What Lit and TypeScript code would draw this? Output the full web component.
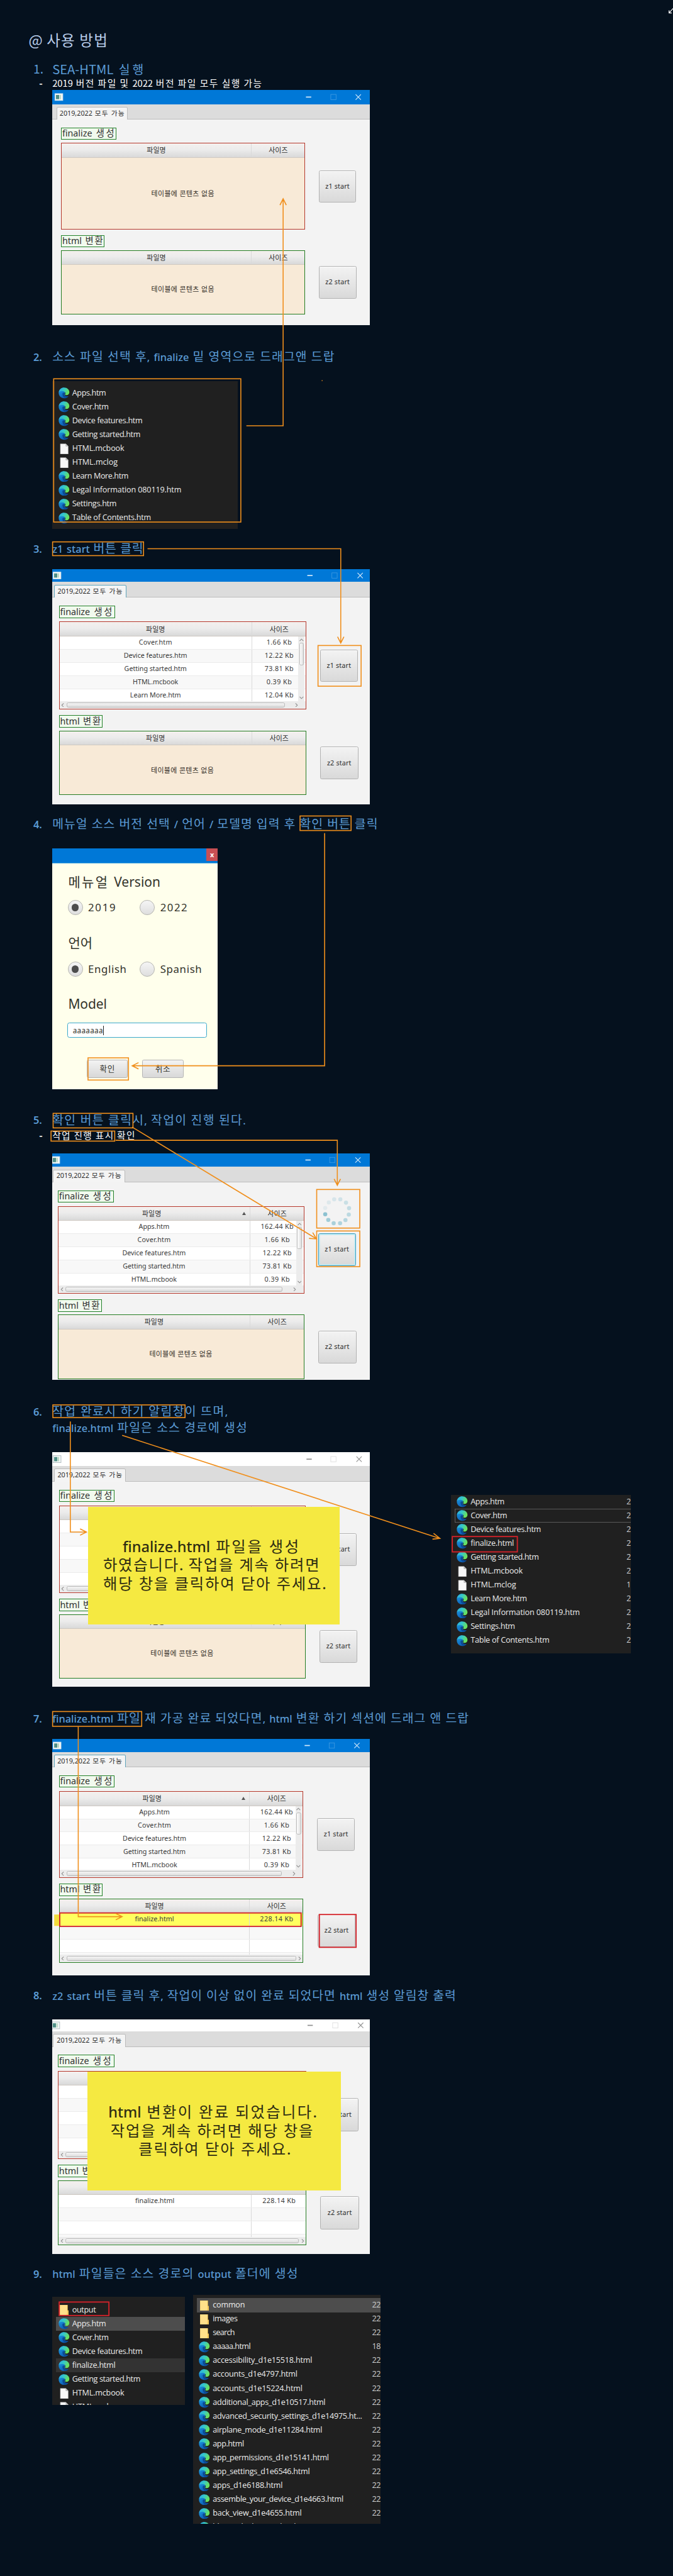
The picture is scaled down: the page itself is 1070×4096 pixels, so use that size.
import { LitElement, html, svg, css, nothing } from "lit";
import { customElement, property } from "lit/decorators.js";
import { classMap } from "lit/directives/class-map.js";
import { styleMap } from "lit/directives/style-map.js";

const px = (n: number) => `${n}px`;

/**
 * A single line of text that spans exactly `w` units. Hangul takes up the tracking;
 * Latin runs beside it keep their own spacing and may be set a little smaller.
 */
@customElement("fit-text")
class FitText extends LitElement {
  @property({ type: Number }) w = 0;
  @property() text = "";
  static styles = css`
    :host { display: inline-block; white-space: pre; flex: none; text-align: left; }
    .line { display: inline-block; letter-spacing: var(--track, 0); }
    .lat { font-size: var(--lat-size, 1em); font-weight: var(--lat-weight, inherit); letter-spacing: 0; }
  `;
  private runs() {
    const mixed = /[가-힣]/.test(this.text);
    return mixed ? this.text.split(/([!-~]+)/).filter(s => s !== "") : [this.text];
  }
  updated() {
    this.style.width = px(this.w);
    const line = this.renderRoot.querySelector(".line") as HTMLElement;
    line.style.setProperty("--track", "0px");
    const box = this.getBoundingClientRect().width;
    if (!box) return;
    const natural = (line.getBoundingClientRect().width / box) * this.w;
    const runs = this.runs();
    const tracked = runs.length > 1 ? runs.filter(r => !/^[!-~]/.test(r)).join("").length : this.text.length;
    line.style.setProperty("--track", px((this.w - natural) / Math.max(1, tracked - 0.5)));
  }
  render() {
    const runs = this.runs();
    return html`<span class="line">${runs.length > 1
      ? runs.map(r => /^[!-~]/.test(r) ? html`<span class="lat">${r}</span>` : r)
      : this.text}</span>`;
  }
}

const fit = (text: string, w: number) => html`<fit-text .text=${text} .w=${w}></fit-text>`;

interface FileRow { icon: "edge" | "doc" | "dir"; name: string; w: number; mark?: string; end?: string; }

const N: Record<string, FileRow> = {
  apps: { icon: "edge", name: "Apps.htm", w: 64 },
  cover: { icon: "edge", name: "Cover.htm", w: 69 },
  device: { icon: "edge", name: "Device features.htm", w: 133 },
  finalize: { icon: "edge", name: "finalize.html", w: 82 },
  getting: { icon: "edge", name: "Getting started.htm", w: 129 },
  mcbook: { icon: "doc", name: "HTML.mcbook", w: 98.5 },
  mclog: { icon: "doc", name: "HTML.mclog", w: 86 },
  learn: { icon: "edge", name: "Learn More.htm", w: 106.5 },
  legal: { icon: "edge", name: "Legal Information 080119.htm", w: 206.5 },
  settings: { icon: "edge", name: "Settings.htm", w: 84 },
  toc: { icon: "edge", name: "Table of Contents.htm", w: 149 },
};

const icons = {
  edge: svg`<svg class="ico" viewBox="0 0 24 24">
    <defs>
      <linearGradient id="eb" x1="0" y1="0" x2=".5" y2="1"><stop offset="0" stop-color="#1fa6ea"/><stop offset="1" stop-color="#0c5cb4"/></linearGradient>
      <linearGradient id="eg" x1="0" y1="0" x2="1" y2=".4"><stop offset="0" stop-color="#2aa8e4"/><stop offset=".5" stop-color="#36c8c8"/><stop offset="1" stop-color="#6be25a"/></linearGradient>
    </defs>
    <path fill="url(#eb)" d="M12 0.5C5 0.5.5 5.5.5 12S5.5 23.5 12 23.5c4 0 7.400-1.800 9.400-4.600-3.500 1.300-8.400 0-8.400-4.400L14 9z"/>
    <path fill="#0b4a94" d="M8.600 13.500c-.3 5 3 9.500 8 8.900 2-.8 3.700-2 4.800-3.500-3.900 1.500-9.400 0-9.400-4.400 0-1.500.8-2.500.8-2.500-2-.8-4-.7-4.200 1.500z"/>
    <path fill="url(#eg)" d="M.8 10.500C1.800 4.700 6.500.5 12.200.5c6.500 0 11.300 4.500 11.300 10.200 0 3.700-2.900 6.100-6 6.100-2.600 0-3.800-1-3.200-2 1.600-2.600-.2-5.800-4.200-6.600C6 7.400 2.300 8.600.8 10.500z"/>
  </svg>`,
  doc: svg`<svg class="ico" viewBox="0 0 24 24">
    <path fill="#f7f7f7" stroke="#a9a9a9" stroke-width=".8" d="M4 1h12l5 5v17H4z"/><path fill="#c9c9c9" stroke="#8c8c8c" stroke-width=".6" d="M16 1v5h5z"/>
  </svg>`,
  dir: svg`<svg class="ico" viewBox="0 0 24 24">
    <path fill="#e9b94c" d="M3 1.500h17V13h1.800v10H3z"/><path fill="#ffe08a" d="M3 1.500h16V23H3z"/><path fill="#f4c95d" d="M19 14h2.800v9H18z"/>
  </svg>`,
};

/** A dark explorer file listing. */
@customElement("file-list")
class FileList extends LitElement {
  @property({ attribute: false }) rows: FileRow[] = [];
  static styles = css`
    :host { display: block; background: #202020; overflow: hidden; box-sizing: border-box; }
    .row { display: flex; align-items: center; height: 26.27px; box-sizing: border-box; margin-left: 7px;
      font: 15px/20px "Open Sans", "Noto Sans", "Noto Sans CJK KR", sans-serif; color: #ececec; }
    .ico { width: 21px; height: 21px; flex: none; margin-right: 5px; }
    .row.hot { background: #4d4d4d; }
    .row.dim { background: #333; }
    .row.ring { box-shadow: inset 1px 0 #6c6c6c, inset 0 1px #6c6c6c, inset 0 -1px #6c6c6c; }
    .lead { width: 4.500px; flex: none; }
    .end { color: #cfcfcf; }
    .space { flex: 1; }
  `;
  render() {
    return this.rows.map(r => html`
      <div class=${classMap({ row: true, [r.mark ?? "plain"]: true })}>
        <span class="lead"></span>${icons[r.icon]}${fit(r.name, r.w)}<span class="space"></span>
        ${r.end ? html`<span class="end">${fit(r.end, r.end.length * 8.2)}</span>` : nothing}
      </div>`);
  }
}

interface Cell { name: string; w: number; size: string; sw: number; }
const cell = (name: string, w: number, size: string, sw: number): Cell => ({ name, w, size, sw });
const C = {
  apps: cell("Apps.htm", 58, "162.44 Kb", 62),
  cover: cell("Cover.htm", 63, "1.66 Kb", 48),
  device: cell("Device features.htm", 120, "12.22 Kb", 55),
  getting: cell("Getting started.htm", 118, "73.81 Kb", 55),
  mcbook: cell("HTML.mcbook", 86, "0.39 Kb", 48),
  learn: cell("Learn More.htm", 96, "12.04 Kb", 55),
  fin: cell("finalize.html", 74, "228.14 Kb", 63),
};

/** Vertical measures count from the window's top, horizontal ones from its left. */
interface Win {
  h: number; title: number; strip: number; tabX: number; tabW: number; tabTop: number; focusTab?: boolean; idle?: boolean;
  iconX: number; ctl: [number, number, number];
  x: number; w: number; col: number; lab1: [number, number]; lab2: [number, number]; labH: number;
  t1: [number, number, number]; t2: [number, number, number]; rows1?: Cell[]; rows2?: Cell[]; sort?: boolean;
  b1: [number, number, number, number]; b2: [number, number, number, number]; focusB1?: boolean; picked?: boolean;
  note?: { x: number; y: number; w: number; h: number; pad: number; lines: [string, number, number][] };
}

/** The converter application window. */
@customElement("app-window")
class AppWindow extends LitElement {
  @property({ attribute: false }) c!: Win;
  static styles = css`
    :host { display: block; position: relative; background: #f3f3f3; overflow: hidden;
      font-family: "Noto Sans", "Noto Sans CJK KR", sans-serif; font-size: 12.8px; line-height: 16px; color: #2c2c2c; }
    .title { background: #0078d7; color: #d6ebfb; display: flex; align-items: center; box-sizing: border-box; }
    .title.idle { background: #fff; color: #8f8f8f; }
    .title svg { width: 600px; height: 100%; display: block; }
    .strip { display: flex; align-items: flex-end; background: #dcdcdc; border-bottom: 1px solid #bcbcbc; box-sizing: border-box; }
    .tab { background: #f4f4f4; border: 1px solid #bcbcbc; border-bottom: 0; border-radius: 3px 3px 0 0; box-sizing: border-box;
      display: flex; align-items: center; justify-content: center; margin-bottom: -1px; }
    .tab.focus { border: 2px solid #5fa5bd; border-bottom: 0; }
    .body { display: flex; align-items: flex-start; }
    .left, .right { display: flex; flex-direction: column; align-items: flex-start; flex: none; }
    .label { border: 1px solid #23812a; background: #f1faee; box-sizing: border-box; display: flex; align-items: center;
      padding-left: 1px; font-size: 17px; line-height: 20px; color: #303030; }
    .table { position: relative; box-sizing: border-box; border: 1px solid #b5382c; display: flex; flex-direction: column; overflow: hidden; background: #f8ead7; }
    .table.green { border-color: #247c22; }
    .head { display: flex; background: linear-gradient(#f4f0ee, #ececec 45%, #d9d9d9); border-bottom: 1px solid #cfc9c2; box-sizing: border-box; flex: none; font-size: 13px; }
    .c1, .c2 { display: flex; align-items: center; justify-content: center; box-sizing: border-box; flex: none; position: relative; }
    .c1 { border-right: 1px solid #dadada; }
    .c2 { flex: 1; padding-left: 1px; }
    .empty { flex: 1; display: flex; align-items: center; justify-content: center; font-size: 13px; color: #332d27; padding-right: 1px; }
    .rows { flex: 1; overflow: hidden; background: #fff; }
    .row { display: flex; height: 24.95px; background: #fff; border-bottom: 1px solid #ebebeb; box-sizing: border-box; color: #3a3a3a; }
    .row:nth-child(even) { background: #f8f8f8; }
    .row.picked { background: #ffff5e; }
    .sortmark { position: absolute; right: 7px; width: 0; border: 4px solid transparent; border-top: 0; border-bottom: 7px solid #555; }
    .vbar { position: absolute; right: 2px; width: 12px; background: #ececec; display: flex; flex-direction: column; align-items: center; justify-content: space-between; }
    .vbar .thumb { width: 9px; height: 42px; margin-bottom: auto; border: 1px solid #bdbdbd; border-radius: 3px; background: linear-gradient(90deg, #fff, #dedede); box-sizing: border-box; }
    .hbar { height: 14px; flex: none; background: #ececec; display: flex; align-items: center; padding: 0 3px; }
    .hbar .thumb { flex: 1; height: 10px; margin: 0 4px; border: 1px solid #b9b9b9; border-radius: 3px; background: linear-gradient(#f6f6f6, #dcdcdc); box-sizing: border-box; }
    .hbar.short { padding-right: 14px; }
    .hbar.short .thumb { margin-right: 20px; }
    .chev { width: 6px; height: 8px; flex: none; fill: none; stroke: #8b8b8b; stroke-width: 1.2; }
    .chev.v { width: 8px; height: 6px; margin: 3px 0; }
    .btn { display: flex; align-items: center; justify-content: center; box-sizing: border-box; border: 1px solid #b2b2b2; border-radius: 3px;
      background: linear-gradient(#f3f3f3, #d9d9d9); box-shadow: inset 0 1px #fff; }
    .btn.focus { border: 2px solid #3c9cbc; box-shadow: inset 0 0 0 2px #b9e9f4; }
    .note { position: absolute; background: #f5e941; color: #2f2d12; box-sizing: border-box; font-size: 29px; line-height: 35px; --lat-size: 28px; --lat-weight: 500; }
    .nl { display: flex; height: 35px; align-items: center; }
  `;
  private table(t: [number, number, number], rows: Cell[] | undefined, green: boolean, first: boolean, gap: number) {
    const c = this.c;
    const colW = px(c.col - c.x - 1.5);
    const full: (Cell | null)[] = rows ? (first ? rows : [...rows, null, null, null]) : [];
    return html`<div class=${classMap({ table: true, green })} style=${styleMap({ marginTop: px(gap), width: px(c.w), height: px(t[1]) })}>
      <div class="head" style=${styleMap({ height: px(t[2]) })}>
        <div class="c1" style=${styleMap({ width: colW, paddingRight: px(c.sort && first ? 9 : 0) })}>
          ${fit("파일명", 36)}${c.sort && first ? html`<span class="sortmark"></span>` : nothing}
        </div>
        <div class="c2">${fit("사이즈", 36)}</div>
      </div>
      ${rows ? html`
        <div class="rows">${full.map((r, i) => html`
          <div class=${classMap({ row: true, picked: !!c.picked && !first && i === 0 })}>
            <div class="c1" style=${styleMap({ width: colW })}>${r && r.name ? fit(r.name, r.w) : nothing}</div>
            <div class="c2">${r && r.size ? fit(r.size, r.sw) : nothing}</div>
          </div>`)}</div>
        <div class=${classMap({ hbar: true, short: first })}>
          <svg class="chev" viewBox="0 0 6 8"><path d="M5 0.500L1.500 4 5 7.500"/></svg><span class="thumb"></span>
          <svg class="chev" viewBox="0 0 6 8"><path d="M1 0.500L4.500 4 1 7.500"/></svg>
        </div>
        ${first ? html`<div class="vbar" style=${styleMap({ top: px(t[2]), height: px(t[1] - t[2] - 17) })}>
          <svg class="chev v" viewBox="0 0 8 6"><path d="M.5 5L4 1.500 7.500 5"/></svg><span class="thumb"></span>
          <svg class="chev v" viewBox="0 0 8 6"><path d="M.5 1L4 4.500 7.500 1"/></svg></div>` : nothing}
      ` : html`<div class="empty">${fit("테이블에 콘텐츠 없음", 119)}</div>`}
    </div>`;
  }
  private button(text: string, b: [number, number, number, number], top: number, left: number, focus: boolean) {
    return html`<div class=${classMap({ btn: true, focus })}
      style=${styleMap({ marginTop: px(b[1] - top), marginLeft: px(b[0] - left), width: px(b[2]), height: px(b[3]) })}>${fit(text, 46)}</div>`;
  }
  render() {
    const c = this.c;
    const mid = c.title / 2;
    const edge = c.x + c.w;
    return html`
      <div class=${classMap({ title: true, idle: !!c.idle })} style=${styleMap({ height: px(c.title) })}>
        <svg viewBox="0 0 600 ${c.title}" fill="none" stroke="currentColor">
          <rect x=${c.iconX} y=${mid - 6.5} width="15" height="13" fill="#f3f7f6" stroke=${c.idle ? "#a8b4b8" : "#d5e4ec"}/>
          <rect x=${c.iconX + 2} y=${mid - 4} width="6" height="8" fill="#4f8f86" stroke="none"/>
          <rect x=${c.iconX + 9} y=${mid - 4} width="2" height="8" fill="#a9cfb4" stroke="none"/>
          <path stroke-width="2" d="M${c.ctl[0] - 5} ${mid}h10"/>
          <rect opacity=".3" x=${c.ctl[1] - 5} y=${mid - 5} width="10" height="10"/>
          <path stroke-width="1.3" d="M${c.ctl[2] - 5} ${mid - 5}l10 10m0 -10l-10 10"/>
        </svg>
      </div>
      <div class="strip" style=${styleMap({ height: px(c.strip - c.title), paddingLeft: px(c.tabX) })}>
        <div class=${classMap({ tab: true, focus: !!c.focusTab })} style=${styleMap({ width: px(c.tabW), height: px(c.strip - c.tabTop) })}>${fit("2019,2022 모두 가능", 123)}</div>
      </div>
      <div class="body">
        <div class="left" style=${styleMap({ width: px(edge), paddingLeft: px(c.x), boxSizing: "border-box" })}>
          <div class="label" style=${styleMap({ marginTop: px(c.lab1[0] - c.strip), width: px(c.lab1[1]), height: px(c.labH) })}>${fit("finalize 생성", 100)}</div>
          ${this.table(c.t1, c.rows1, false, true, c.t1[0] - c.lab1[0] - c.labH)}
          <div class="label" style=${styleMap({ marginTop: px(c.lab2[0] - c.t1[0] - c.t1[1]), width: px(c.lab2[1]), height: px(c.labH) })}>${fit("html 변환", 78)}</div>
          ${this.table(c.t2, c.rows2, true, false, c.t2[0] - c.lab2[0] - c.labH)}
        </div>
        <div class="right">
          ${this.button("z1 start", c.b1, c.strip, edge, !!c.focusB1)}
          ${this.button("z2 start", c.b2, c.b1[1] + c.b1[3], edge, false)}
        </div>
      </div>
      ${c.note ? html`<div class="note" style=${styleMap({ left: px(c.note.x), top: px(c.note.y), width: px(c.note.w), height: px(c.note.h), paddingTop: px(c.note.pad) })}>
        ${c.note.lines.map(l => html`<div class="nl" style=${styleMap({ paddingLeft: px(l[2]) })}>${fit(l[0], l[1])}</div>`)}
      </div>` : nothing}`;
  }
}

const LIST = [C.apps, C.cover, C.device, C.getting, C.mcbook];
const blank = cell("", 0, "", 0);
const BLANKS = [blank, blank, blank, blank, blank];

const W1: Win = { h: 445, title: 27, strip: 56, tabX: 8, tabW: 134.5, tabTop: 32.5, iconX: 5, ctl: [485, 532, 579],
  x: 16.5, w: 461.5, col: 377, lab1: [71, 104.5], lab2: [275, 82], labH: 23, t1: [100, 164.5, 27], t2: [304, 120.5, 26],
  b1: [504, 152, 70.5, 61], b2: [504, 333, 71, 62] };
const W3: Win = { h: 445, title: 24, strip: 53.5, tabX: 3, tabW: 137, tabTop: 29.5, focusTab: true, iconX: 1.5, ctl: [487.5, 534, 582.5],
  x: 12.5, w: 468, col: 378, lab1: [68.8, 106], lab2: [276, 83], labH: 23.5, t1: [99, 166, 27], t2: [305, 122, 27], rows1: [C.cover, C.device, C.getting, C.mcbook, C.learn],
  b1: [506, 151.5, 72, 61.5], b2: [506, 335.5, 73, 62] };
const W5: Win = { h: 428, title: 25, strip: 54.5, tabX: 1, tabW: 136.5, tabTop: 30.5, iconX: -1, ctl: [484, 530, 578.5],
  x: 10.5, w: 466, col: 374.5, lab1: [69.5, 105.5], lab2: [276, 83], labH: 23.5, t1: [99.5, 165.5, 26.5], t2: [305, 121.5, 26.5], rows1: LIST, sort: true,
  b1: [502.5, 151, 71.5, 62], b2: [502.5, 335, 72.5, 62], focusB1: true };
const W6: Win = { h: 444, title: 26.5, strip: 55.5, tabX: 3, tabW: 136.5, tabTop: 31.5, idle: true, iconX: 1.5, ctl: [486, 532, 580.5],
  x: 12.5, w: 466.5, col: 377, lab1: [71, 105.5], lab2: [277.5, 83], labH: 23.5, t1: [101, 165.500, 26.5], t2: [306.5, 121.5, 26.5], rows1: BLANKS,
  b1: [504, 153, 72, 62], b2: [505, 336.5, 72, 61.5],
  note: { x: 68, y: 103, w: 475, h: 222.700, pad: 58, lines: [["finalize.html 파일을 생성", 335, 65], ["하였습니다. 작업을 계속 하려면", 410, 28], ["해당 창을 클릭하여 닫아 주세요.", 421, 28]] } };
const W7: Win = { h: 447.5, title: 25, strip: 54.5, tabX: 3.5, tabW: 135, tabTop: 30, focusTab: true, iconX: 1.5, ctl: [482.5, 529, 576.5],
  x: 12.5, w: 462.5, col: 374, lab1: [69, 105], lab2: [274, 82.5], labH: 23.5, t1: [99, 164.5, 27], t2: [303, 121, 26], rows1: LIST, rows2: [C.fin], sort: true, picked: true,
  b1: [501, 150, 71, 61.700], b2: [501.5, 332, 72, 62] };
const W8: Win = { h: 444, title: 22.5, strip: 52.500, tabX: 1.5, tabW: 137, tabTop: 27.5, idle: true, iconX: -1, ctl: [488, 535.500, 583.500],
  x: 10.5, w: 470, col: 377.5, lab1: [67, 106.5], lab2: [275, 83], labH: 23.5, t1: [97.5, 166.5, 26.5], t2: [304, 123, 26.5], rows1: BLANKS, rows2: [C.fin],
  b1: [507, 149, 72, 62.5], b2: [507, 334, 73, 63],
  note: { x: 66, y: 99, w: 479.5, h: 225, pad: 59, lines: [["html 변환이 완료 되었습니다.", 393, 40], ["작업을 계속 하려면 해당 창을", 384, 44], ["클릭하여 닫아 주세요.", 287, 97]] } };

const at = (r: FileRow, extra: Partial<FileRow>): FileRow => ({ ...r, ...extra });
const LIST2 = [N.apps, N.cover, N.device, N.getting, N.mcbook, N.mclog, N.learn, N.legal, N.settings, N.toc];
const LIST6 = [N.apps, at(N.cover, { mark: "ring" }), N.device, N.finalize, N.getting, N.mcbook, N.mclog, N.learn, N.legal, N.settings, N.toc]
  .map(r => at(r, { end: r === N.mclog ? "1" : "2" }));
const LIST9A = [{ icon: "dir", name: "output", w: 45 } as FileRow, at(N.apps, { mark: "hot" }), N.cover, N.device, at(N.finalize, { mark: "dim" }), N.getting, N.mcbook, N.mclog];
const LIST9B: FileRow[] = ([
  ["common", 60.7], ["images", 47], ["search", 41.5], ["aaaaa.html", 71.5], ["accessibility_d1e15518.html", 188], ["accounts_d1e4797.html", 160],
  ["accounts_d1e15224.html", 169.5], ["additional_apps_d1e10517.html", 213], ["advanced_security_settings_d1e14975.ht...", 282.5],
  ["airplane_mode_d1e11284.html", 207], ["app.html", 59], ["app_permissions_d1e15141.html", 219.5], ["app_settings_d1e6546.html", 183.5],
  ["apps_d1e6188.html", 132], ["assemble_your_device_d1e4663.html", 247], ["back_view_d1e4655.html", 168], ["bluetooth_d1e9216.html", 157],
] as [string, number][]).map(([name, w], i) => ({
  icon: i < 3 ? "dir" : "edge", name, w, mark: i === 0 ? "hot" : undefined, end: i === 3 ? "18" : i < 16 ? "22" : undefined,
}));

const SPIN: [number, number][] = [[615.100, 2296.800], [620.900, 2307.500], [631.100, 2313.900], [643.200, 2313.900], [653.400, 2307.900], [659.700, 2297.500],
  [660.200, 2285.400], [654.400, 2275], [643.700, 2268.600], [632.100, 2268.600], [621.900, 2274.600], [615.100, 2285]];

@customElement("app-root")
class AppRoot extends LitElement {
  static styles = css`
    :host { display: block; width: 1070px; height: 4096px; overflow: hidden; background: #05111e; }
    .page { position: relative; zoom: 0.8406; width: 1273px; height: 4873px; overflow: hidden; background: #05111e;
      font-family: "Noto Sans", "Noto Sans CJK KR", sans-serif; color: #5b9bd5; }
    .intro { height: 115px; box-sizing: border-box; padding: 59px 0 0 54px; }
    .intro h1 { margin: 0; display: flex; align-items: center; height: 32px; font: 400 28px/32px "Noto Sans CJK KR", sans-serif; color: #b7cbe8; }
    .step { box-sizing: border-box; }
    .line { display: flex; align-items: center; height: 32px; font-size: 23px; line-height: 28px; font-weight: 400; font-family: "Noto Sans", "Noto Sans CJK KR", sans-serif;
      --lat-size: 19.500px; --lat-weight: 500; }
    .line.second { height: 30px; padding-left: 99px; }
    .num { width: 36px; padding-left: 63px; flex: none; font-weight: 600; font-size: 19.500px; }
    .line.thin { --lat-size: 24px; --lat-weight: 400; font-family: "Noto Sans CJK KR", sans-serif; }
    .num.thin { font-weight: 400; font-size: 23px; }
    .sub { display: flex; align-items: center; height: 22px; font: 400 17.500px/20px "Noto Sans CJK KR", sans-serif; color: #fff; }
    .sub.tall { height: 26px; }
    .dash { width: 25px; padding-left: 74px; flex: none; font-weight: 700; }
    .fig { margin-left: 99px; display: flex; align-items: flex-start; }
    .fig app-window { width: 600px; flex: none; }
    .list2 { width: 351px; height: 280px; padding-top: 9.500px; }
    .list6 { width: 340.300px; height: 300.500px; margin: 80.700px 0 0 153.700px; }
    .list9a { width: 251px; height: 204px; margin-top: 4px; padding-top: 11.500px; }
    .list9b { width: 355px; height: 433.500px; margin-left: 15px; padding-top: 6.500px; }

    .dialog { width: 313px; height: 455px; background: #ffffec; color: #33332b; }
    .dbar { height: 28.500px; background: #0078d7; border-bottom: 1px solid #5ab0e0; box-sizing: border-box; display: flex; justify-content: flex-end; }
    .close { width: 22px; height: 24px; background: #c84f54; color: #fff; display: flex; align-items: center; justify-content: center; font: 700 13px/16px "Noto Sans", sans-serif; padding-bottom: 1px; box-sizing: border-box; }
    .dhead { height: 40px; display: flex; align-items: center; padding-left: 30px; font-size: 25px; line-height: 30px; }
    .dhead.a { margin-top: 15px; }
    .dhead.b { margin: 20px 0; }
    .dhead.c { margin-top: 37px; }
    .radios { display: grid; grid-template-columns: 136.500px 1fr; align-items: center; align-content: center; padding-left: 29px; height: 56px; font-size: 20px; line-height: 24px; }
    .radios.low { height: 18px; }
    .opt { display: flex; align-items: center; gap: 10px; }
    .dot { width: 28.500px; height: 28.500px; border-radius: 50%; border: 1px solid #b5b5b0; box-sizing: border-box; background: linear-gradient(#f5f5f5, #dedede); display: flex; align-items: center; justify-content: center; }
    .dot.on::after { content: ""; width: 14px; height: 14px; border-radius: 50%; background: #4c4c4c; }
    .field { margin: 15px 0 0 28.500px; width: 263.500px; height: 29px; box-sizing: border-box; border: 2px solid #3ba9cb; border-radius: 4px; background: #fff; display: flex; align-items: center; padding-left: 9px; font-size: 14px; line-height: 18px; }
    .caret { width: 1px; height: 18px; background: #222; }
    .acts { display: flex; gap: 27px; margin: 41px 0 0 65px; }
    .act { width: 78px; height: 35px; box-sizing: border-box; border: 1px solid #b5b5b5; border-radius: 3px; background: linear-gradient(#f3f3f3, #d8d8d8); display: flex; align-items: center; justify-content: center; font-size: 15px; line-height: 18px; }
    .ink { position: absolute; left: 0; top: 0; width: 1273px; height: 4872px; fill: none; stroke: #f08f1c; stroke-width: 1.9; }
  `;

  private step(height: number, pad: number, n: string, head: [string, number], more: unknown, gap: number, fig: unknown, thin = false) {
    return html`<section class="step" style=${styleMap({ height: px(height), paddingTop: px(pad) })}>
      <div class=${classMap({ line: true, thin })}><span class=${classMap({ num: true, thin })}>${n}</span>${fit(head[0], head[1])}</div>
      ${more}
      <div class="fig" style=${styleMap({ marginTop: px(gap) })}>${fig}</div>
    </section>`;
  }
  private win(c: Win) {
    return html`<app-window .c=${c} style=${styleMap({ height: px(c.h) })}></app-window>`;
  }
  private dialog() {
    const opt = (t: string, w: number, on: boolean) => html`<span class="opt"><span class=${classMap({ dot: true, on })}></span>${fit(t, w)}</span>`;
    return html`<div class="dialog">
      <div class="dbar"><span class="close">x</span></div>
      <div class="dhead a">${fit("메뉴얼 Version", 173)}</div>
      <div class="radios">${opt("2019", 53, true)}${opt("2022", 52, false)}</div>
      <div class="dhead b">${fit("언어", 46)}</div>
      <div class="radios low">${opt("English", 73, true)}${opt("Spanish", 79, false)}</div>
      <div class="dhead c">${fit("Model", 73)}</div>
      <div class="field">${fit("aaaaaaa", 57)}<span class="caret"></span></div>
      <div class="acts"><span class="act">${fit("확인", 29)}</span><span class="act">${fit("취소", 29)}</span></div>
    </div>`;
  }
  private ink() {
    const box = (x1: number, y1: number, x2: number, y2: number, red = false) =>
      svg`<rect x=${x1} y=${y1} width=${x2 - x1} height=${y2 - y1} stroke=${red ? "#d3222a" : "#f08f1c"} stroke-width=${red ? 2.2 : 1.9}/>`;
    return html`<svg class="ink" viewBox="0 0 1273 4872">
      <path stroke="#fff" stroke-width="1.5" d="M1265.500 19.500v5h5M1266 24l8-9"/>
      <path d="M466 805.300H535.500V377M529.500 388l6-12 6 12"/>
      ${box(101.5, 716.5, 455.5, 987.5)}
      <path d="M608.500 720h1.500"/>
      ${box(99.5, 1025, 271.5, 1051)}
      <path d="M279 1038H644.500V1216M638.500 1204.500l6 12 6 -12"/>
      ${box(601.5, 1221, 683, 1298)}
      ${box(567.500, 1543.500, 664, 1571)}
      <path d="M614 1576V2016H250M262 2010l-12 6 12 6"/>
      ${box(166.500, 2001, 243, 2043)}
      ${box(100.500, 2106, 251.500, 2133.500)}
      ${box(96.500, 2139.500, 217, 2158.500)}
      <path d="M250 2132L598 2343M584.500 2342.500l14 1 -7 -12"/>
      <path d="M218.600 2157H638V2241M632 2230l6 12 6 -12"/>
      ${box(599, 2250, 680.500, 2323)}
      ${box(599, 2328.500, 680.500, 2396)}
      ${box(100, 2657.500, 350, 2681.500)}
      <path d="M133 2689V2898H163M151.500 2892l12 6 -12 6"/>
      <path d="M231 2715L832 2910M820 2900.500l12 9.500 -14 1.500"/>
      ${box(99.500, 3237.500, 268, 3265.500)}
      <g stroke="none"><rect x="102.500" y="3621.500" width="10" height="21.500" fill="#f3dc3b"/><rect x="570" y="3621.500" width="2.500" height="21.500" fill="#e4f04a"/></g>
      ${box(113, 3618.500, 569.500, 3644, true)}
      ${box(604, 3621.500, 673.500, 3683.500, true)}
      <path d="M148 3266V3625.500H230M219 3619.500l12 6 -12 6"/>
      ${box(855.500, 2906.500, 978.500, 2935.500, true)}
      ${box(112, 4354.500, 206, 4380, true)}
      <g stroke="none" fill="#86bfcf">${SPIN.map(([x, y], i) => svg`<circle cx=${x} cy=${y} r="3.900" opacity=${i === 0 ? 0.95 : Math.max(0.15, 0.8 - i * 0.06)}/>`)}</g>
    </svg>`;
  }
  render() {
    return html`<main class="page">
      <header class="intro"><h1>${fit("@ 사용 방법", 150)}</h1></header>
      ${this.step(533, 0, "1.", ["SEA-HTML 실행", 175], html`<div class="sub"><span class="dash">-</span>${fit("2019 버전 파일 및 2022 버전 파일 모두 실행 가능", 397)}</div>`, 1, this.win(W1), true)}
      ${this.step(372, 11, "2.", ["소스 파일 선택 후, finalize 밑 영역으로 드래그앤 드랍", 534], nothing, 30, html`<file-list class="list2" .rows=${LIST2}></file-list>`)}
      ${this.step(515, 2, "3.", ["z1 start 버튼 클릭", 172], nothing, 23, this.win(W3))}
      ${this.step(560, 8, "4.", ["메뉴얼 소스 버전 선택 / 언어 / 모델명 입력 후 확인 버튼 클릭", 616], nothing, 30, this.dialog())}
      ${this.step(555, 8, "5.", ["확인 버튼 클릭시, 작업이 진행 된다.", 365], html`<div class="sub tall"><span class="dash">-</span>${fit("작업 진행 표시 확인", 157)}</div>`, 21, this.win(W5))}
      ${this.step(580, 4, "6.", ["작업 완료시 하기 알림창이 뜨며,", 331], html`<div class="line second">${fit("finalize.html 파일은 소스 경로에 생성", 369)}</div>`, 31,
        html`${this.win(W6)}<file-list class="list6" .rows=${LIST6}></file-list>`)}
      ${this.step(525, 5, "7.", ["finalize.html 파일 재 가공 완료 되었다면, html 변환 하기 섹션에 드래그 앤 드랍", 788], nothing, 22, this.win(W7))}
      ${this.step(525, 4, "8.", ["z2 start 버튼 클릭 후, 작업이 이상 없이 완료 되었다면 html 생성 알림창 출력", 764], nothing, 29, this.win(W8))}
      ${this.step(592, 5, "9.", ["html 파일들은 소스 경로의 output 폴더에 생성", 465], nothing, 24,
        html`<file-list class="list9a" .rows=${LIST9A}></file-list><file-list class="list9b" .rows=${LIST9B}></file-list>`)}
      ${this.ink()}
    </main>`;
  }
}
